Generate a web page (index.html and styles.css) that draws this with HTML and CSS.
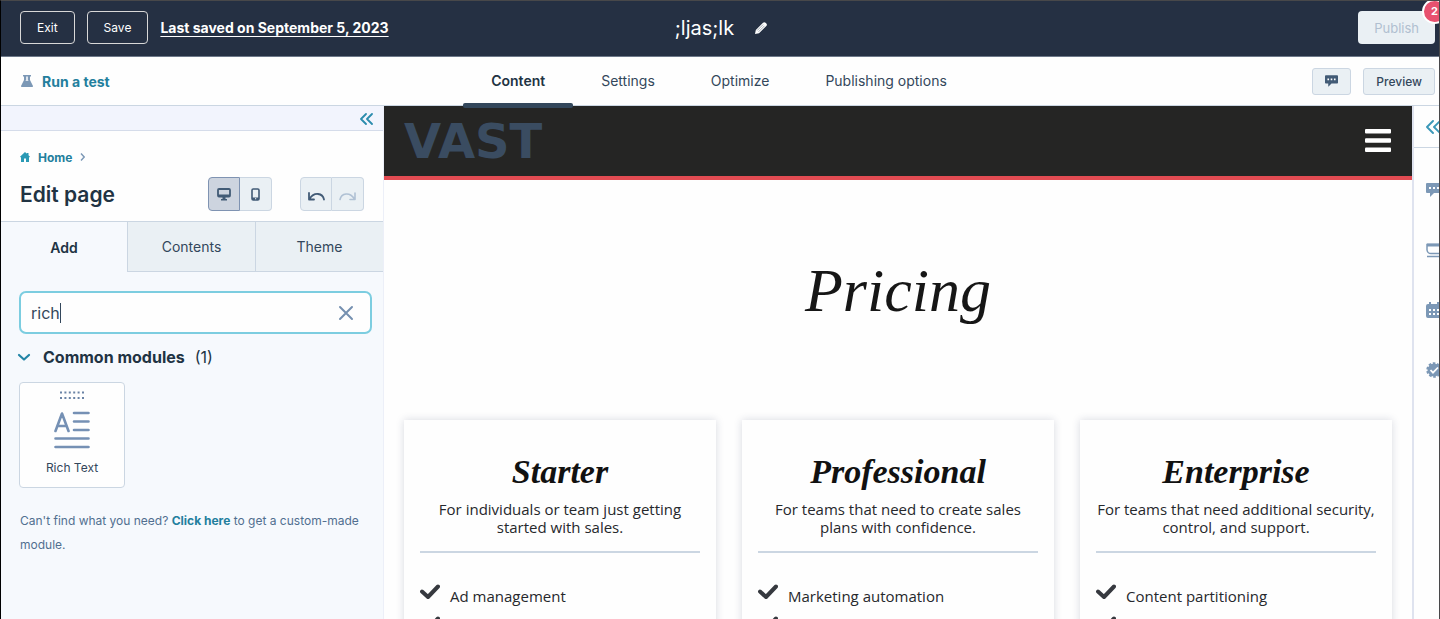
FILE: index.html
```html
<!DOCTYPE html>
<html lang="en">
<head>
<meta charset="utf-8">
<title>Edit page</title>
<link rel="stylesheet" href="styles.css">
</head>
<body>
<div class="app">
  <header class="topbar">
    <div class="topbar-left">
      <button class="ghost-btn" type="button">Exit</button>
      <button class="ghost-btn" type="button">Save</button>
      <a class="saved-link" href="#">Last saved on September 5, 2023</a>
    </div>
    <div class="page-name">
      <span>;ljas;lk</span>
      <button class="icon-btn" type="button" aria-label="Rename">
        <svg width="14" height="14" viewBox="0 0 14 14"><path d="M1 13l.8-4L9 1.800q1.300-1.300 2.600 0l.7.7q1.200 1.200 0 2.500L5 12.200z" fill="#fff"/><path d="M3.200 9.500l6-6M4.500 10.800l6-6" stroke="#8c94a0" stroke-width=".8"/></svg>
      </button>
    </div>
    <div class="topbar-right">
      <button class="publish" type="button" disabled>Publish</button>
      <span class="badge">2</span>
    </div>
  </header>

  <nav class="navbar">
    <a class="run-test" href="#">
      <svg width="12" height="12" viewBox="0 0 12 12"><path d="M2 0h8v1.500H9V5l3 6q.2 1-.8 1H.8q-1 0-.8-1l3-6V1.500H2z" fill="#7c98b6"/><path d="M5 1.500h2V5l.6 1H4.400L5 5z" fill="#dfe6ee"/></svg>
      Run a test
    </a>
    <div class="nav-tabs">
      <a class="nav-tab active" href="#">Content</a>
      <a class="nav-tab" href="#">Settings</a>
      <a class="nav-tab" href="#">Optimize</a>
      <a class="nav-tab" href="#">Publishing options</a>
    </div>
    <div class="nav-actions">
      <button class="small-btn" type="button" aria-label="Comments">
        <svg width="13" height="12" viewBox="0 0 16 14"><path d="M1 0h14q1 0 1 1v8q0 1-1 1H8l-4 4v-4H1q-1 0-1-1V1q0-1 1-1z" fill="#425b76"/><path d="M3 4h2v2H3zM7 4h2v2H7zM11 4h2v2h-2z" fill="#fff"/></svg>
      </button>
      <button class="small-btn" type="button">Preview</button>
    </div>
  </nav>

  <div class="workspace">
    <aside class="sidebar">
      <div class="collapse">
        <button class="icon-btn" type="button" aria-label="Collapse panel">
          <svg width="13" height="12" viewBox="0 0 13 12" fill="none" stroke="#2b8cad" stroke-width="1.800" stroke-linecap="round" stroke-linejoin="round"><path d="M6 1L1 6l5 5M12 1L7 6l5 5"/></svg>
        </button>
      </div>
      <div class="side-head">
        <div class="crumb">
          <svg width="10" height="10" viewBox="0 0 10 10"><path d="M5 0l1.800 1.700V1h1.700v2.300L10 4.800 9 5.500V10H6V6.500H4V10H1V5.500L0 4.800z" fill="#2b9ab5"/></svg>
          <a href="#">Home</a>
          <svg width="5" height="8" viewBox="0 0 5 8" fill="none" stroke="#7c98b6" stroke-width="1.400"><path d="M1 .5L4.200 4 1 7.500"/></svg>
        </div>
        <div class="title-row">
          <h1>Edit page</h1>
          <div class="group">
            <button class="seg on" type="button" aria-label="Desktop">
              <svg width="14" height="13" viewBox="0 0 14 13"><rect x="1" y="1" width="12" height="7.500" rx="1" fill="none" stroke="#425b76" stroke-width="1.800"/><path d="M1 6.500h12V9H1zM5.500 9h3v2h-3zM4 11h6v1.500H4z" fill="#425b76"/></svg>
            </button>
            <button class="seg" type="button" aria-label="Mobile">
              <svg width="9" height="13" viewBox="0 0 9 13"><rect x="1" y="1" width="7" height="11" rx="1.200" fill="none" stroke="#425b76" stroke-width="1.600"/><path d="M1 9.500h7V12H1z" fill="#425b76"/><path d="M4 10.300h1.200v1H4z" fill="#fff"/></svg>
            </button>
          </div>
          <div class="group history">
            <button class="seg" type="button" aria-label="Undo">
              <svg width="17" height="10" viewBox="0 0 17 10" fill="none" stroke="#425b76" stroke-width="1.800" stroke-linecap="round" stroke-linejoin="round"><path d="M1 2v6.500h5M1.500 8Q5 2.500 10 3q5 .5 6 5.500"/></svg>
            </button>
            <button class="seg" type="button" aria-label="Redo">
              <svg width="17" height="10" viewBox="0 0 17 10" fill="none" stroke="#b0c1d4" stroke-width="1.600" stroke-linecap="round" stroke-linejoin="round"><path d="M16 2v6.500h-5M15.500 8Q12 2.500 7 3 2 3.500 1 8.500"/></svg>
            </button>
          </div>
        </div>
      </div>
      <div class="side-tabs">
        <button class="side-tab active" type="button">Add</button>
        <button class="side-tab" type="button">Contents</button>
        <button class="side-tab" type="button">Theme</button>
      </div>
      <div class="panel">
        <div class="search">
          <label class="search-label"><input class="search-input" type="text" value="rich" size="3" aria-label="Search modules"></label>
          <span class="caret"></span>
          <button class="icon-btn clear" type="button" aria-label="Clear search">
            <svg width="16" height="16" viewBox="0 0 16 16" stroke="#7590b0" stroke-width="2" stroke-linecap="round"><path d="M2 2l12 12M14 2L2 14"/></svg>
          </button>
        </div>
        <h2 class="section">
          <svg width="14" height="9" viewBox="0 0 14 9" fill="none" stroke="#2385a6" stroke-width="2.200" stroke-linecap="round" stroke-linejoin="round"><path d="M2 2l5 4.500L12 2"/></svg>
          <span>Common modules</span>
          <span class="count">(1)</span>
        </h2>
        <button class="module" type="button">
          <svg width="24" height="9" viewBox="0 0 24 9" stroke="#6a83a5" stroke-width="2" stroke-dasharray="2 2.400"><path d="M0 1.500h24M0 7h24"/></svg>
          <svg width="36" height="38" viewBox="0 0 36 38" fill="none" stroke="#7590b4" stroke-width="2.600" stroke-linecap="round" stroke-linejoin="round"><path d="M1.500 20L8 2.500 14.500 20M4 15h8M20 2h14.500M20 10.500h14.500M20 19h14.500M1.500 27.500h33M1.500 36h33"/></svg>
          <span>Rich Text</span>
        </button>
        <p class="help">Can't find what you need? <a href="#">Click here</a> to get a custom-made module.</p>
      </div>
    </aside>

    <main class="canvas">
      <div class="site-head">
        <span class="logo">VAST</span>
        <button class="icon-btn" type="button" aria-label="Menu">
          <svg width="26" height="24" viewBox="0 0 26 24" fill="#fff"><rect width="26" height="4.500" rx="1"/><rect y="9.300" width="26" height="4.500" rx="1"/><rect y="18.600" width="26" height="4.500" rx="1"/></svg>
        </button>
      </div>
      <h2 class="hero">Pricing</h2>
      <div class="plans">
        <section class="plan">
          <h3>Starter</h3>
          <p>For individuals or team just getting started with sales.</p>
          <ul>
            <li><svg class="tick" viewBox="0 0 20 16"><path d="M2 7.500l6 5.500L18 2.500"/></svg>Ad management</li>
            <li><svg class="tick" viewBox="0 0 20 16"><path d="M2 7.500l6 5.500L18 2.500"/></svg></li>
          </ul>
        </section>
        <section class="plan">
          <h3>Professional</h3>
          <p>For teams that need to create sales plans with confidence.</p>
          <ul>
            <li><svg class="tick" viewBox="0 0 20 16"><path d="M2 7.500l6 5.500L18 2.500"/></svg>Marketing automation</li>
            <li><svg class="tick" viewBox="0 0 20 16"><path d="M2 7.500l6 5.500L18 2.500"/></svg></li>
          </ul>
        </section>
        <section class="plan">
          <h3>Enterprise</h3>
          <p>For teams that need additional security, control, and support.</p>
          <ul>
            <li><svg class="tick" viewBox="0 0 20 16"><path d="M2 7.500l6 5.500L18 2.500"/></svg>Content partitioning</li>
            <li><svg class="tick" viewBox="0 0 20 16"><path d="M2 7.500l6 5.500L18 2.500"/></svg></li>
          </ul>
        </section>
      </div>
    </main>

    <aside class="rail">
      <button class="icon-btn rail-top" type="button" aria-label="Expand panel">
        <svg width="16" height="14" viewBox="0 0 16 14" fill="none" stroke="#3b98b8" stroke-width="1.900" stroke-linecap="round" stroke-linejoin="round"><path d="M7 1L1 7l6 6M14 1L8 7l6 6"/></svg>
      </button>
      <div class="rail-icons">
        <button class="icon-btn" type="button" aria-label="Chat">
          <svg width="16" height="16" viewBox="0 0 16 16" fill="#7c98b6"><path d="M1 1h14q1 0 1 1v8q0 1-1 1H8l-4 4v-4H1q-1 0-1-1V2q0-1 1-1z"/><path d="M3 5h2v2H3zM7 5h2v2H7zM11 5h2v2h-2z" fill="#fff"/></svg>
        </button>
        <button class="icon-btn" type="button" aria-label="Inbox">
          <svg width="16" height="16" viewBox="0 0 16 16" fill="none" stroke="#7c98b6" stroke-width="1.500"><path d="M16 2.500H1V8q.5 3.500 4 3.500h11M1 14.500h15"/><path d="M1 3h15" stroke-width="3"/></svg>
        </button>
        <button class="icon-btn" type="button" aria-label="Calendar">
          <svg width="16" height="16" viewBox="0 0 16 16"><path d="M2 2h1V0h2v2h6V0h2v2h1q2 0 2 2v10q0 2-2 2H2q-2 0-2-2V4q0-2 2-2z" fill="#7c98b6"/><path d="M3 7h2v2H3zM7 7h2v2H7zM11 7h2v2h-2zM3 11h2v2H3zM7 11h2v2H7zM11 11h2v2h-2z" fill="#fff"/></svg>
        </button>
        <button class="icon-btn" type="button" aria-label="Approvals">
          <svg width="16" height="16" viewBox="0 0 16 16" fill="none"><circle cx="8" cy="8" r="6.500" fill="#7c98b6" stroke="#7c98b6" stroke-width="2.500" stroke-dasharray="2.500 1.600"/><path d="M4.500 8l2.500 2.700L12 5.500" stroke="#fff" stroke-width="1.800"/></svg>
        </button>
      </div>
    </aside>
  </div>
</div>
</body>
</html>
```
FILE: styles.css
```css
* { box-sizing: border-box; }
body { margin: 0; background: #fefefe; color: #33475b; font-family: Inter, "Open Sans", sans-serif; font-size: 14px; }
button, input { font: inherit; color: inherit; }
a { color: inherit; text-decoration: none; }
svg { display: block; flex: none; }
h1, h2, h3, p, ul { margin: 0; padding: 0; }

.app { height: 100vh; display: flex; flex-direction: column; overflow: hidden; border: solid #48484a; border-width: 1px 1px 0; border-left-color: #000; }
.icon-btn { display: flex; padding: 0; border: 0; background: none; }

.topbar { display: grid; grid-template-columns: 1fr auto 1fr; align-items: center; height: 56px; flex: none; padding: 0 4px 2px 19px; background: #253043; border-bottom: 1px solid #6d7889; color: #fff; }
.topbar-left { display: flex; align-items: center; gap: 12px; }
.ghost-btn { height: 33px; padding: 0 16px; background: none; border: 1px solid #d8d8d8; border-radius: 4px; font-size: 12px; }
.saved-link { font-weight: 700; font-size: 14px; text-decoration: underline; text-underline-offset: 3px; white-space: nowrap; }
.page-name { display: flex; align-items: center; gap: 20px; margin-right: 12px; font-size: 20px; }
.topbar-right { position: relative; justify-self: end; }
.publish { display: block; height: 33px; padding: 0 16px; border: 0; border-radius: 4px; background: #eaf0f4; color: #b0bfd0; font-size: 13px; }
.badge { position: absolute; top: -12px; right: -12px; width: 25px; height: 25px; border: 2px solid #fff; border-radius: 50%; background: #e8516f; font-size: 11px; font-weight: 700; line-height: 21px; text-align: center; }

.navbar { display: grid; grid-template-columns: 1fr auto 1fr; height: 49px; flex: none; padding: 0 4px 0 20px; border-bottom: 1px solid #cbd6e2; }
.run-test { display: flex; align-items: center; gap: 9px; color: #237f9d; font-weight: 700; }
.nav-tabs { display: flex; margin-right: 18px; }
.nav-tab { display: flex; align-items: center; padding: 0 28px 2px; position: relative; }
.nav-tab.active { font-weight: 600; color: #213343; }
.nav-tab.active::after { content: ""; position: absolute; left: 0; right: 0; bottom: -3px; height: 5px; border-radius: 2px; background: #33475b; z-index: 1; }
.nav-actions { display: flex; align-items: center; justify-content: flex-end; gap: 12px; }
.small-btn { height: 27px; padding: 0 12px; border: 1px solid #cbd6e2; border-radius: 3px; background: #eaf0f4; font-size: 12px; font-weight: 500; }

.workspace { flex: 1; min-height: 0; display: flex; }
.sidebar { width: 383px; flex: none; display: flex; flex-direction: column; background: #f6f9fd; border-right: 1px solid #eceff8; }
.collapse { display: flex; align-items: center; justify-content: flex-end; height: 25px; padding: 2px 10px 0 0; background: #f2f4fd; border-bottom: 1px solid #d5dcea; }
.side-head { height: 91px; padding: 17px 19px 0; background: #fefefe; border-bottom: 1px solid #cbd6e2; }
.crumb { display: flex; align-items: center; gap: 8px; height: 18px; font-size: 12px; font-weight: 700; color: #237f9d; }
.title-row { display: flex; align-items: center; margin-top: 11px; }
.title-row h1 { flex: 1; font-size: 21px; font-weight: 600; color: #213343; }
.group { display: flex; }
.history { margin-left: 28px; }
.seg { display: flex; align-items: center; justify-content: center; width: 32px; height: 34px; padding: 0; border: 1px solid #cbd6e2; background: #eaf0f4; }
.history .seg { padding-top: 4px; }
.seg:first-child { border-radius: 4px 0 0 4px; }
.seg:last-child { border-radius: 0 4px 4px 0; border-left: 0; }
.seg.on { background: #cdd4df; border-color: #7f93b2; }

.side-tabs { display: grid; grid-template-columns: 126px 1fr 1fr; height: 50px; flex: none; }
.side-tab { padding: 0; border: solid #cbd6e2; border-width: 0 0 1px 1px; background: #eaf0f4; }
.side-tab.active { border: 0; background: none; font-weight: 600; color: #213343; }

.panel { padding: 19px 11px 0 18px; }
.search { display: flex; align-items: center; height: 43px; padding: 0 16px 0 10px; border: 2px solid #7ccde0; border-radius: 7px; background: #fefefe; font-size: 16px; }
.search-label { display: flex; }
.search-input { field-sizing: content; min-width: 0; padding: 0; border: 0; outline: 0; background: none; }
.caret { width: 1px; height: 20px; background: #33475b; }
.clear { margin-left: auto; }
.section { display: flex; align-items: center; gap: 10px; margin: 11px 0 0 -2px; height: 24px; font-size: 16px; font-weight: 700; color: #213343; }
.section span:first-of-type { margin-left: 2px; }
.count { font-weight: 400; }
.module { display: flex; flex-direction: column; align-items: center; width: 106px; height: 106px; margin: 13px 0 0; padding: 8px 0 0; border: 1px solid #cbd6e2; border-radius: 4px; background: #fefefe; font-size: 12px; }
.module svg + svg { margin: 11px 0; }
.help { margin: 21px 0 0 1px; font-size: 12px; line-height: 24px; color: #516f90; }
.help a { font-weight: 700; color: #237f9d; }

.canvas { flex: 1; min-width: 0; overflow: hidden; }
.site-head { display: flex; align-items: center; justify-content: space-between; height: 74px; padding: 0 21px 0 20px; background: #252524; border-bottom: 4px solid #e24b52; }
.logo { color: #3a4c61; font-family: "DejaVu Sans", sans-serif; font-weight: 700; font-size: 48px; line-height: 48px; }
.hero { padding-top: 73px; text-align: center; color: #161616; font: italic 400 62px/74px "Liberation Serif", serif; }
.plans { display: grid; grid-template-columns: repeat(3, 1fr); gap: 26px; padding: 93px 20px 0; }
.plan { min-height: 240px; padding: 34px 16px 0; background: #fefefe; box-shadow: 0 0 8px rgba(40, 50, 90, .18); color: #26282c; font: 15px/18px "Open Sans", sans-serif; }
.plan h3 { text-align: center; color: #111; font: italic 700 34px/36px "Liberation Serif", serif; }
.plan p { padding: 10px 0 15px; border-bottom: 2px solid #cbd6e2; text-align: center; }
.plan ul { list-style: none; padding-top: 27px; }
.plan li { display: flex; align-items: center; gap: 10px; height: 32px; }
.tick { width: 20px; height: 16px; margin-bottom: 9px; fill: none; stroke: #36393f; stroke-width: 4; stroke-linecap: round; stroke-linejoin: round; }

.rail { width: 27px; flex: none; overflow: hidden; border-left: 2px solid #dfe3ef; }
.rail-top { width: 100%; height: 42px; align-items: center; padding-left: 12px; border-bottom: 1px solid #cbd6e2; }
.rail-icons { display: flex; flex-direction: column; gap: 44px; padding: 34px 0 0 12px; }
```
